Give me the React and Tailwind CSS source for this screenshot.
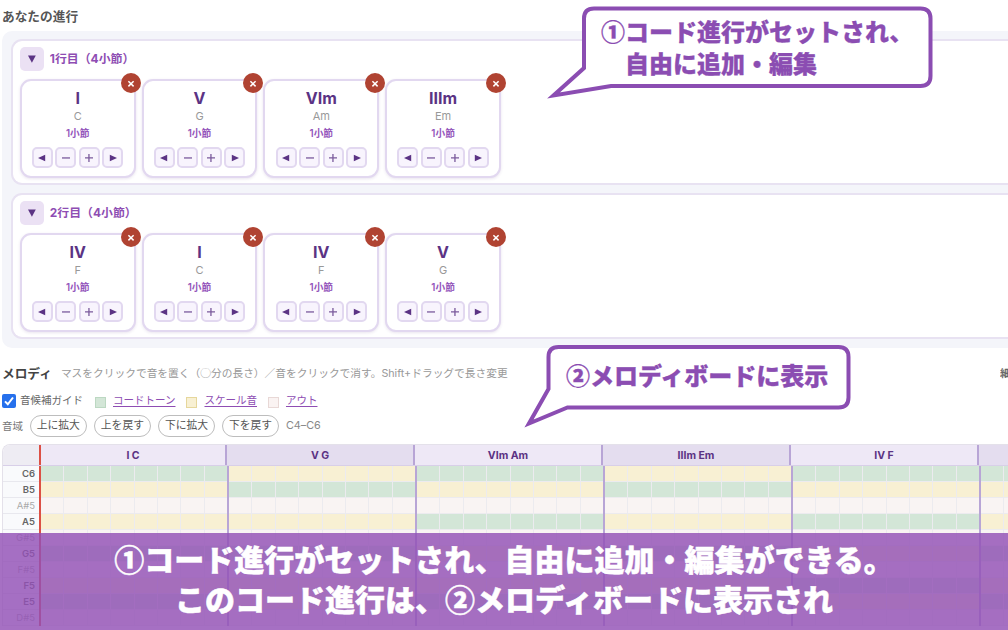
import React from "react";

const UI = "font-['Inter','Noto_Sans_CJK_JP',sans-serif]";
const JP = "font-['Noto_Sans_CJK_JP',sans-serif]";

const LINES = [
  { title: "1行目（4小節）", chords: [["I", "C"], ["V", "G"], ["VIm", "Am"], ["IIIm", "Em"]] },
  { title: "2行目（4小節）", chords: [["IV", "F"], ["I", "C"], ["IV", "F"], ["V", "G"]] },
];

const BARS = [
  { label: "I C", tones: ["C", "E", "G"] },
  { label: "V G", tones: ["G", "B", "D"] },
  { label: "VIm Am", tones: ["A", "C", "E"] },
  { label: "IIIm Em", tones: ["E", "G", "B"] },
  { label: "IV F", tones: ["F", "A", "C"] },
  { label: "", tones: ["C", "E", "G"] },
];

const NOTES = ["C6", "B5", "A#5", "A5", "G#5", "G5", "F#5", "F5", "E5", "D#5"];

function StepIcon({ kind }) {
  return (
    <svg viewBox="0 0 20 20" className="h-5 w-5 shrink-0" fill="#5b3384">
      {kind === "prev" && <path d="M6 10l7.2-3.3v6.6z" />}
      {kind === "next" && <path d="M14 10L6.800 6.700v6.600z" />}
      {kind === "minus" && <path d="M6 9.300h8v1.300H6z" fill="#7a5a9c" />}
      {kind === "plus" && <path d="M6 9.300h3.300V6h1.300v3.300h3.400v1.300h-3.400v3.400H9.300v-3.400H6z" fill="#7a5a9c" />}
    </svg>
  );
}

function ChordCard({ degree, name }) {
  return (
    <div className="relative flex h-[99px] w-[115.800px] shrink-0 flex-col items-center rounded-[11px] border-2 border-[#e2d8f0] bg-white pt-[7px] shadow-[0_1px_3px_rgba(80,40,120,0.12)]">
      <button className="absolute -right-[7.500px] -top-[8px] flex h-[20px] w-[20px] items-center justify-center rounded-full bg-[#b04332]">
        <svg viewBox="0 0 20 20" className="h-5 w-5" stroke="#fff" strokeWidth="1.500">
          <path d="M7.400 8.200l5.200 5.200M12.600 8.200l-5.200 5.200" />
        </svg>
      </button>
      <div className="text-[16px] font-bold leading-[20px] text-[#5b3384]">{degree}</div>
      <div className="mt-px text-[11px] leading-[14px] text-[#999]">{name}</div>
      <div className="mt-[4px] text-[9.700px] font-semibold leading-[14px] text-[#9455bb]">1小節</div>
      <div className="mt-[6px] flex gap-[2.500px]">
        {["prev", "minus", "plus", "next"].map((k) => (
          <button key={k} className="flex h-[21px] w-[21px] items-center justify-center rounded-[5px] border-2 border-[#e2d8f0] bg-[#f8f4fd]">
            <StepIcon kind={k} />
          </button>
        ))}
      </div>
    </div>
  );
}

function LinePanel({ title, chords }) {
  return (
    <section className="h-[146px] rounded-l-[11px] border-2 border-r-0 border-[#e8e2f2] bg-white pl-[7px] pt-[6px]">
      <div className="flex items-center">
        <button className="flex h-[24px] w-[24px] items-center justify-center rounded-[5px] bg-[#ebe1f4]">
          <svg viewBox="0 0 10 10" className="h-[10px] w-[10px]" fill="#5b3384">
            <path d="M1 1.400h7.800L4.900 8.800z" />
          </svg>
        </button>
        <h3 className="ml-[6px] whitespace-nowrap text-[11.900px] font-bold leading-[20px] text-[#8e4db3]">{title}</h3>
      </div>
      <div className="mt-[8px] flex gap-[6px]">
        {chords.map(([degree, name], i) => (
          <ChordCard key={i} degree={degree} name={name} />
        ))}
      </div>
    </section>
  );
}

function Legend({ label, swatch }) {
  return (
    <span className="flex items-center gap-[7px]">
      <i className={"mt-[2px] h-[11px] w-[11px] border " + swatch} />
      <a className="text-[#8e4db3] underline decoration-1 underline-offset-[1.500px]">{label}</a>
    </span>
  );
}

function cellColor(note, tones) {
  const key = note.replace(/\d/, "");
  if (key.includes("#")) return "bg-[#f9f4f3]";
  return tones.includes(key) ? "bg-[#d3e6d7]" : "bg-[#f8f0d3]";
}

function MelodyBoard() {
  return (
    <div className="ml-[2px] mt-[7px] w-[1180px] shrink-0 overflow-hidden rounded-tl-[8px] border-l border-t border-[#e4e1ea]">
      <div className="flex h-[21px] border-b border-[#d8cfe8]">
        <div className="w-[36px] shrink-0 bg-[#eeecf3]" />
        <div className="w-[2px] shrink-0 bg-[#dc5045]" />
        {BARS.map((bar, i) => (
          <div
            key={i}
            className={
              "flex shrink-0 items-center justify-center border-r-2 border-[#b8a5d6] pt-[2px] text-[10.500px] font-bold text-[#5b3384] " +
              (i === 0 ? "w-[186px] " : "w-[188px] ") +
              (i % 2 ? "bg-[#e4ddef]" : "bg-[#eee8f6]")
            }
          >
            {bar.label}
          </div>
        ))}
      </div>
      {NOTES.map((note) => (
        <div key={note} className="flex h-[16.050px]">
          <div
            className={
              "flex w-[36px] shrink-0 items-center justify-end border-b border-[#e8e8ee] bg-[#f9fafc] pr-[4px] pt-px text-[9.500px] leading-[12px] " +
              (note.includes("#") ? "text-[#aaa]" : "font-semibold text-[#666]")
            }
          >
            {note}
          </div>
          <div className="w-[2px] shrink-0 bg-[#dc5045]" />
          {BARS.map((bar, i) => (
            <div key={i} className="flex w-[188px] shrink-0 border-r-2 border-[#b8a5d6]">
              {Array.from({ length: 8 }, (_, n) => (
                <div
                  key={n}
                  className={"flex-1 border-b border-[#ecebef] " + (n < 7 ? "border-r " : "") + cellColor(note, bar.tones)}
                />
              ))}
            </div>
          ))}
        </div>
      ))}
    </div>
  );
}

export default function App() {
  return (
    <main className={"relative flex h-[630px] w-[1008px] flex-col overflow-hidden bg-white " + UI}>
      <h2 className="ml-[2px] mt-[7px] text-[12.700px] font-bold leading-[20px] text-[#555]">あなたの進行</h2>
      <div className="ml-[2px] mt-[4px] flex h-[317px] shrink-0 flex-col gap-[8px] rounded-l-[10px] bg-[#f4f5fa] pl-[8.800px] pt-[8px]">
        {LINES.map((line) => (
          <LinePanel key={line.title} {...line} />
        ))}
      </div>

      <div className="ml-[2px] mt-[15px] flex h-[22px] shrink-0 items-center whitespace-nowrap">
        <h2 className="text-[12.700px] font-bold text-[#444]">メロディ</h2>
        <p className="ml-[9px] text-[10.730px] text-[#999]">
          マスをクリックで音を置く（<span className={JP}>◯</span>分の長さ）／音をクリックで消す。Shift+ドラッグで長さ変更
        </p>
        <span className="ml-auto w-[8px] overflow-hidden text-[10.700px] font-bold text-[#666]">細</span>
      </div>

      <div className="ml-[2px] mt-[5px] flex h-[21px] shrink-0 items-center whitespace-nowrap text-[10.500px] text-[#666]">
        <span className="flex h-[14px] w-[14px] items-center justify-center rounded-[2px] bg-[#2670ec]">
          <svg viewBox="0 0 14 14" className="h-[14px] w-[14px]" fill="none" stroke="#fff" strokeWidth="2">
            <path d="M3 7.400l2.800 2.900L11 3.500" />
          </svg>
        </span>
        <span className="ml-[4px] pt-px">音候補ガイド</span>
        <div className="ml-[12px] flex gap-[11px] pt-px">
          <Legend label="コードトーン" swatch="border-[#bcd8c2] bg-[#d3e6d7]" />
          <Legend label="スケール音" swatch="border-[#e6d79c] bg-[#f8f0d3]" />
          <Legend label="アウト" swatch="border-[#e8d8d6] bg-[#faf3f2]" />
        </div>
      </div>

      <div className="ml-[2px] mt-[4px] flex h-[22px] shrink-0 items-center gap-[6.500px] whitespace-nowrap text-[10.500px] text-[#777]">
        <span className="pt-px">音域</span>
        {["上に拡大", "上を戻す", "下に拡大", "下を戻す"].map((t) => (
          <button key={t} className="flex h-[22px] w-[57.600px] items-center justify-center rounded-full border border-[#bdbdbd] bg-white pt-px text-[10.800px] text-[#555]">
            {t}
          </button>
        ))}
        <span className="pt-px text-[10.800px] text-[#888]">C4–C6</span>
      </div>

      <MelodyBoard />

      <div className={"absolute left-[540px] top-0 h-[110px] w-[400px] " + JP}>
        <svg viewBox="0 0 400 110" className="absolute inset-0 h-full w-full" fill="#fff" stroke="#8b4db2" strokeWidth="4">
          <path d="M54 8.500H380.500Q390.500 8.500 390.500 18.500V76Q390.500 86 380.500 86H71L13.500 95.500L44 68V18.500Q44 8.500 54 8.500Z" />
        </svg>
        <p className="relative ml-[61px] mt-[15px] whitespace-pre text-[24px] font-black leading-[32px] text-[#8b4db2] [-webkit-text-stroke:0.300px_#8b4db2]">
          ①コード進行がセットされ、{"\n"}　自由に追加・編集
        </p>
      </div>

      <div className={"absolute left-[515px] top-[340px] h-[95px] w-[345px] " + JP}>
        <svg viewBox="0 0 345 95" className="absolute inset-0 h-full w-full" fill="#fff" stroke="#8b4db2" strokeWidth="4">
          <path d="M43.500 7H323.500Q333.500 7 333.500 17V57.500Q333.500 67.500 323.500 67.500H52.500L14 83.500L33.500 49V17Q33.500 7 43.500 7Z" />
        </svg>
        <p className="relative ml-[51px] mt-[19px] whitespace-nowrap text-[24px] font-black leading-[32px] text-[#8b4db2] [-webkit-text-stroke:0.300px_#8b4db2]">
          ②メロディボードに表示
        </p>
      </div>

      <div className={"absolute inset-x-0 bottom-0 h-[97.500px] whitespace-nowrap bg-[rgba(146,80,182,0.82)] pt-[5px] text-center text-[30px] font-black leading-[40px] text-white [-webkit-text-stroke:0.500px_white] " + JP}>
        <p>①コード進行がセットされ、自由に追加・編集ができる。</p>
        <p>このコード進行は、②メロディボードに表示され</p>
      </div>
    </main>
  );
}
